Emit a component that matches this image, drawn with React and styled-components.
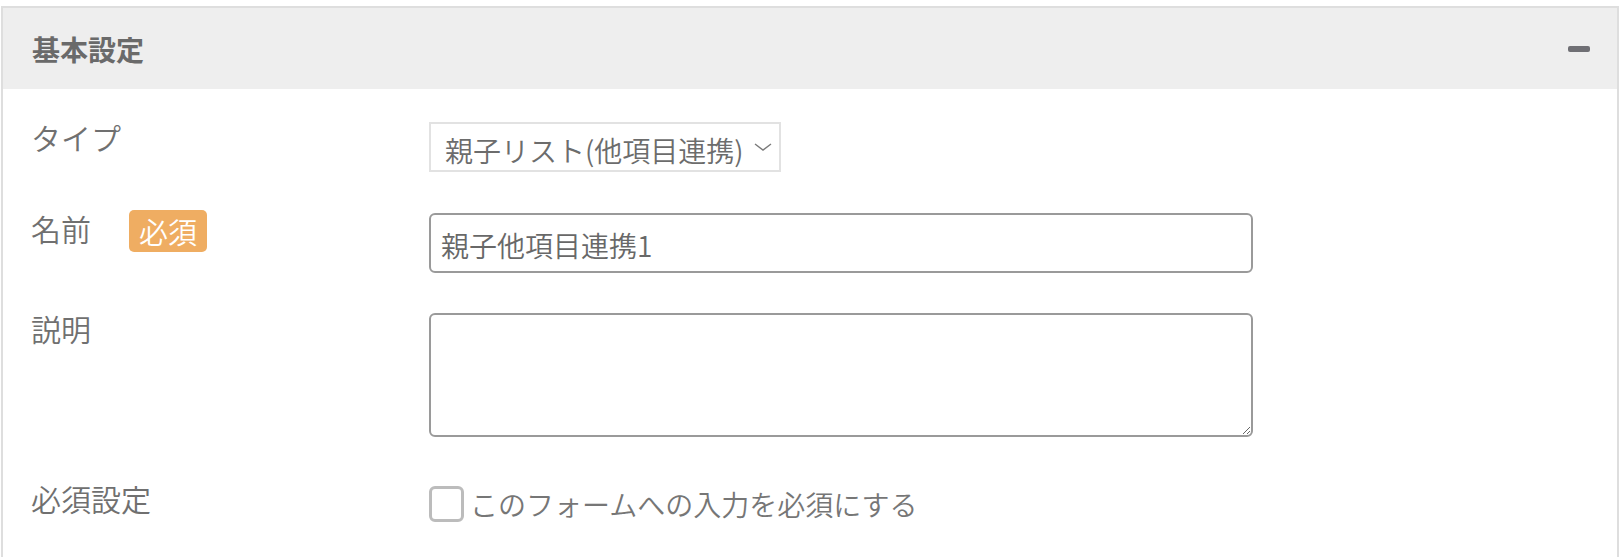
import React from "react";
import styled, {createGlobalStyle} from "styled-components";

const GlobalStyle = createGlobalStyle`
    html, body {
        margin: 0;
        padding: 0;
        background: #ffffff;
    }
    body {
        font-family: "Noto Sans CJK JP", "Noto Sans", sans-serif;
        font-weight: 350;
        color: #707070;
    }
`

const Panel = styled.section`
    margin: 6px 5px 0 1px;
    border: 2px solid #dedede;
    border-bottom: none;
    background: #ffffff;
`

const PanelHeader = styled.div`
    height: 81px;
    background: #eeeeee;
    display: flex;
    align-items: center;
    justify-content: space-between;
    padding: 0 27px 0 29px;
`

const PanelTitle = styled.h2`
    margin: 0;
    font-size: 28px;
    font-weight: 700;
    line-height: 30px;
    color: #6a6a6a;
`

const CollapseButton = styled.button`
    width: 22px;
    height: 6px;
    padding: 0;
    border: none;
    border-radius: 2px;
    background: #6f6f74;
    cursor: pointer;
`

const PanelBody = styled.div`
    display: flex;
    flex-direction: column;
    gap: 40px;
    padding: 33px 28px 40px 28px;
`

const Row = styled.div`
    display: flex;
    align-items: flex-start;
    margin-top: ${props => props.$shift || 0}px;
`

const LabelCell = styled.div`
    width: 398px;
    flex: none;
    display: flex;
    align-items: flex-start;
`

const LabelText = styled.span`
    font-size: 30px;
    line-height: 30px;
    color: #707070;
    white-space: nowrap;
`

const RequiredBadge = styled.span`
    margin: -3px 0 0 38px;
    height: 42px;
    padding: 0 10px;
    border-radius: 5px;
    background: #efad62;
    color: #ffffff;
    font-size: 29px;
    line-height: 42px;
    white-space: nowrap;
`

const SelectBox = styled.div`
    width: 352px;
    height: 50px;
    box-sizing: border-box;
    border: 2px solid #e2e2e2;
    display: flex;
    align-items: flex-start;
    justify-content: space-between;
    padding: 12px 7px 0 14px;
    font-size: 28px;
    line-height: 28px;
    color: #6c6c6c;
    white-space: nowrap;
    cursor: pointer;
`

const Chevron = styled.svg`
    flex: none;
    margin-top: 7px;
`

const TextInput = styled.input`
    width: 824px;
    height: 60px;
    box-sizing: border-box;
    border: 2px solid #9a9a9a;
    border-radius: 6px;
    padding: 4px 10px 0 10px;
    font-family: "Noto Sans CJK JP", "Noto Sans", sans-serif;
    font-weight: 350;
    font-size: 28px;
    color: #686868;
    outline: none;
`

const TextArea = styled.textarea`
    width: 824px;
    height: 124px;
    box-sizing: border-box;
    border: 2px solid #9a9a9a;
    border-radius: 6px;
    padding: 10px;
    font-family: "Noto Sans CJK JP", "Noto Sans", sans-serif;
    font-size: 28px;
    color: #686868;
    outline: none;
    resize: both;
`

const CheckLabel = styled.label`
    margin-top: 3px;
    display: flex;
    align-items: center;
    gap: 6px;
    font-size: 28px;
    line-height: 36px;
    color: #767676;
    cursor: pointer;
`

const CheckBox = styled.span`
    width: 35px;
    height: 36px;
    box-sizing: border-box;
    border: 3px solid #bcbcbc;
    border-radius: 6px;
    background: #ffffff;
    flex: none;
`

const Field = ({label, badge, shift, children}) => (
    <Row $shift={shift}>
        <LabelCell>
            <LabelText>{label}</LabelText>
            {badge && <RequiredBadge>{badge}</RequiredBadge>}
        </LabelCell>
        {children}
    </Row>
)

export default function App() {
    return <>
        <GlobalStyle/>
        <Panel>
            <PanelHeader>
                <PanelTitle>基本設定</PanelTitle>
                <CollapseButton aria-label="collapse"/>
            </PanelHeader>
            <PanelBody>
                <Field label="タイプ">
                    <SelectBox>
                        <span>親子リスト(他項目連携)</span>
                        <Chevron width="18" height="8" viewBox="0 0 18 8">
                            <path d="M1 1 L9 7 L17 1" fill="none" stroke="#7a7a7a" strokeWidth="1.4"/>
                        </Chevron>
                    </SelectBox>
                </Field>
                <Field label="名前" badge="必須" shift={1}>
                    <TextInput defaultValue="親子他項目連携1"/>
                </Field>
                <Field label="説明">
                    <TextArea/>
                </Field>
                <Field label="必須設定" shift={6}>
                    <CheckLabel>
                        <CheckBox/>
                        このフォームへの入力を必須にする
                    </CheckLabel>
                </Field>
            </PanelBody>
        </Panel>
    </>
}
